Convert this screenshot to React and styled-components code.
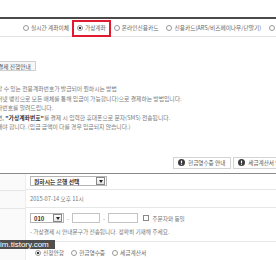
import React from "react";
import styled, { createGlobalStyle } from "styled-components";

const GlobalStyle = createGlobalStyle`
  html, body {
    margin: 0;
    padding: 0;
    background: #ffffff;
  }
  body {
    font-family: "Noto Sans CJK KR", "Noto Sans", sans-serif;
    overflow: hidden;
  }
`;

const Frame = styled.div`
  position: relative;
  width: 276px;
  height: 260px;
  overflow: hidden;
  padding-top: 17px;
  box-sizing: border-box;
  background: #fff;
`;

const TabBar = styled.div`
  display: flex;
  align-items: center;
  gap: 8px;
  height: 17px;
  padding-left: 23px;
  border-top: 2px solid #4a4a4a;
  border-bottom: 1px solid #e2e2e2;
  white-space: nowrap;
`;

const TabItem = styled.label`
  position: relative;
  display: flex;
  align-items: center;
  gap: 2px;
  font-size: 5.7px;
  color: #666;
  line-height: 1;

  ${({ $active }) =>
    $active &&
    `
    &::after {
      content: "";
      position: absolute;
      left: -5px;
      right: -5px;
      top: -5px;
      bottom: -6px;
      border: 2px solid #e01b2f;
    }
  `}
`;

const Radio = styled.span`
  display: inline-block;
  width: 4px;
  height: 4px;
  border-radius: 50%;
  border: 1px solid #999;
  background: ${({ $checked }) =>
    $checked ? "radial-gradient(circle, #333 0 1.2px, #fff 1.6px)" : "#fff"};
  flex-shrink: 0;
`;

const Content = styled.div`
  padding-top: 13px;
`;

const GuideButton = styled.div`
  display: inline-block;
  margin-left: -9px;
  height: 10px;
  line-height: 9px;
  padding: 0 4px 0 6px;
  border: 1px solid #cfcfcf;
  background: #f7f7f7;
  box-sizing: border-box;
  font-size: 5.7px;
  color: #555;
`;

const Desc = styled.div`
  margin-top: 10px;
  margin-left: -3px;
  font-size: 5.8px;
  line-height: 9.6px;
  color: #7a7a7a;
  white-space: nowrap;
`;

const Line = styled.div``;

const Strong = styled.b`
  color: #333;
  font-weight: 700;
`;

const ButtonRow = styled.div`
  display: flex;
  gap: 2px;
  padding-left: 173px;
  margin-top: 25px;
  white-space: nowrap;
`;

const InfoButton = styled.div`
  display: flex;
  align-items: center;
  gap: 3px;
  height: 12px;
  padding: 0 5px 0 4px;
  border: 1px solid #d4d4d4;
  background: #fff;
  box-sizing: border-box;
  font-size: 5.6px;
  color: #555;
`;

const Table = styled.div`
  margin-top: 4px;
  border-top: 1px solid #8a8a8a;
  display: grid;
  grid-template-columns: 26px 1fr;
`;

const Label = styled.div`
  background: #fafafa;
  border-right: 1px solid #ececec;
  border-bottom: 1px solid #e6e6e6;
  height: ${({ $h }) => $h}px;
`;

const Cell = styled.div`
  border-bottom: 1px solid #e6e6e6;
  height: ${({ $h }) => $h}px;
  box-sizing: border-box;
  padding-left: 4px;
  display: flex;
  flex-direction: column;
  justify-content: center;
  gap: 4px;
  white-space: nowrap;
  font-size: 5.7px;
  color: #777;
`;

const Inline = styled.div`
  display: flex;
  align-items: center;
  gap: ${({ $gap }) => $gap || 3}px;
  padding-left: ${({ $indent }) => $indent || 0}px;
`;

const Select = styled.div`
  display: flex;
  align-items: center;
  justify-content: space-between;
  width: ${({ $w }) => $w}px;
  height: 10px;
  box-sizing: border-box;
  border: 1px solid #b5b5b5;
  background: #fff;
  padding: 0 1px 0 3px;
  font-size: 5.8px;
  font-weight: 700;
  color: #333;
`;

const Arrow = styled.span`
  display: flex;
  align-items: center;
  justify-content: center;
  width: 7px;
  height: 6px;
  border: 1px solid #888;
  background: linear-gradient(#fff, #e4e4e4);
`;

const Input = styled.div`
  width: ${({ $w }) => $w}px;
  height: 10px;
  box-sizing: border-box;
  border: 1px solid #c4c4c4;
  background: #fff;
`;

const Dash = styled.span`
  color: #888;
  font-size: 6px;
`;

const CheckBox = styled.span`
  display: inline-block;
  width: 4px;
  height: 4px;
  border: 1px solid #888;
  background: #fff;
  margin-left: 2px;
`;

const Watermark = styled.div`
  position: absolute;
  left: 0;
  top: 240px;
  width: 55px;
  height: 9px;
  background: rgba(55, 55, 55, 0.88);
  color: #fff;
  font-family: "Liberation Sans", Arial, sans-serif;
  font-size: 8px;
  line-height: 9px;
  white-space: nowrap;
  overflow: hidden;
`;

const AlertIcon = () => (
  <svg width="7" height="7" viewBox="0 0 14 14">
    <circle cx="7" cy="7" r="7" fill="#3d3d3d" />
    <rect x="5.8" y="2.8" width="2.4" height="5.4" rx="1" fill="#fff" />
    <circle cx="7" cy="10.4" r="1.3" fill="#fff" />
  </svg>
);

const DownArrow = () => (
  <svg width="4" height="3" viewBox="0 0 4 3">
    <path d="M0 0 L4 0 L2 3 Z" fill="#222" />
  </svg>
);

const tabs = [
  { label: "실시간 계좌이체" },
  { label: "가상계좌", checked: true, active: true },
  { label: "온라인신용카드" },
  { label: "신용카드(ARS/비즈페이나우/단말기)" },
  { label: "휴대폰" },
];

const receipts = [
  { label: "신청안함", checked: true },
  { label: "현금영수증" },
  { label: "세금계산서" },
];

export default function App() {
  return (
    <>
      <GlobalStyle />
      <Frame>
        <TabBar>
          {tabs.map((t) => (
            <TabItem key={t.label} $active={t.active}>
              <Radio $checked={t.checked} />
              {t.label}
            </TabItem>
          ))}
        </TabBar>

        <Content>
          <GuideButton>결제 진행안내</GuideButton>
          <Desc>
            <Line>할 수 있는 전용계좌번호가 발급되어 원하시는 방법</Line>
            <Line>터넷 뱅킹으로 모든 매체를 통해 입금이 가능합니다)으로 결제하는 방법입니다.</Line>
            <Line>좌번호를 알려드립니다.</Line>
            <Line>
              면, <Strong>"가상계좌번호"</Strong>를 결제 시 입력한 휴대폰으로 문자(SMS) 전송됩니다.
            </Line>
            <Line>해야 합니다. (입금 금액이 다를 경우 입금되지 않습니다.)</Line>
          </Desc>

          <ButtonRow>
            <InfoButton>
              <AlertIcon />
              현금영수증 안내
            </InfoButton>
            <InfoButton>
              <AlertIcon />
              세금계산서 안내
            </InfoButton>
          </ButtonRow>

          <Table>
            <Label $h={16} />
            <Cell $h={16}>
              <Select $w={77}>
                원하시는 은행 선택
                <Arrow>
                  <DownArrow />
                </Arrow>
              </Select>
            </Cell>

            <Label $h={17} />
            <Cell $h={17}>2015-07-14 오후 11시</Cell>

            <Label $h={33} />
            <Cell $h={33}>
              <Inline>
                <Select $w={34}>
                  010
                  <Arrow>
                    <DownArrow />
                  </Arrow>
                </Select>
                <Dash>-</Dash>
                <Input $w={28} />
                <Dash>-</Dash>
                <Input $w={30} />
                <CheckBox />
                주문자와 동일
              </Inline>
              <div>- 가상결제 시 안내문구가 전송됩니다. 정확히 기재해 주세요.</div>
            </Cell>

            <Label $h={21} />
            <Cell $h={21}>
              <Inline $gap={7} $indent={5}>
                {receipts.map((r) => (
                  <TabItem as="span" key={r.label}>
                    <Radio $checked={r.checked} />
                    {r.label}
                  </TabItem>
                ))}
              </Inline>
            </Cell>
          </Table>
        </Content>

        <Watermark>im.tistory.com</Watermark>
      </Frame>
    </>
  );
}
